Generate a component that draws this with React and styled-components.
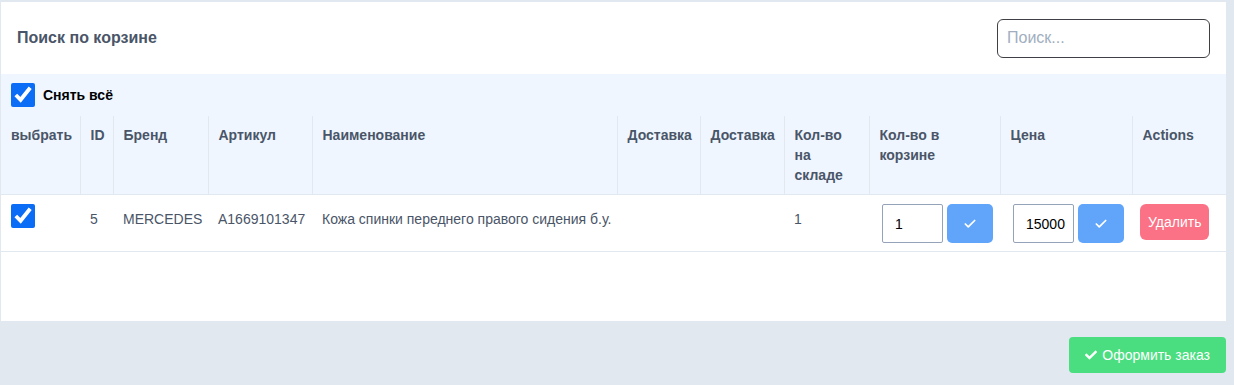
import styled, { createGlobalStyle } from "styled-components";
import { Check } from "lucide-react";
import { FaCheck } from "react-icons/fa";

const GlobalStyle = createGlobalStyle`
  body {
    margin: 0;
    background: #e2e8f0;
    font-family: "Liberation Sans", Arial, sans-serif;
  }
`;

const Page = styled.div`
  padding: 2px 8px 0 1px;
`;

const Card = styled.div`
  background: #fff;
  width: 1225px;
  height: 319px;
`;

const Header = styled.div`
  display: flex;
  align-items: center;
  justify-content: space-between;
  height: 72px;
  padding: 0 16px;
  box-sizing: border-box;
`;

const Title = styled.h2`
  margin: 0;
  font-size: 16px;
  font-weight: 700;
  color: #4a5568;
`;

const Search = styled.input`
  width: 213px;
  height: 39px;
  box-sizing: border-box;
  border: 1px solid #3f3f46;
  border-radius: 6px;
  padding: 0 9px;
  font-size: 16px;
  font-family: inherit;
  outline: none;
  &::placeholder {
    color: #a0aec0;
  }
`;

const SelectAll = styled.label`
  display: flex;
  align-items: center;
  gap: 8px;
  padding: 9px 10px;
  background: #eff6ff;
  font-size: 14px;
  font-weight: 700;
  color: #000;
`;

const Box = styled.input.attrs({ type: "checkbox" })`
  width: 24px;
  height: 24px;
  margin: 0;
  accent-color: #0b6cf5;
`;

const Table = styled.table`
  width: 1225px;
  border-collapse: collapse;
  table-layout: fixed;
`;

const Th = styled.th`
  width: ${(p) => p.w}px;
  background: #eff6ff;
  padding: 9px 10px;
  text-align: left;
  vertical-align: top;
  font-size: 14px;
  line-height: 20px;
  font-weight: 700;
  color: #4a5568;
  border-right: 1px solid #e2e8f0;
  border-bottom: 1px solid #e2e8f0;
  box-sizing: border-box;
  &:last-child {
    border-right: none;
  }
`;

const Td = styled.td`
  padding: 9px 10px 8px;
  vertical-align: top;
  font-size: 14px;
  line-height: 30px;
  color: #4a5568;
  border-bottom: 1px solid #e2e8f0;
  white-space: nowrap;
`;

const Pair = styled.div`
  display: flex;
  gap: 4px;
  margin-left: 3px;
`;

const Num = styled.input`
  flex: none;
  width: 61px;
  height: 39px;
  box-sizing: border-box;
  border: 1px solid #94a3b8;
  border-radius: 2px;
  padding: 0 2px 0 12px;
  font-size: 14px;
  font-family: inherit;
  color: #000;
`;

const Confirm = styled.button`
  flex: none;
  width: 46px;
  height: 39px;
  padding: 0;
  border: none;
  border-radius: 5px;
  background: #60a5fa;
  color: #fff;
  display: flex;
  align-items: center;
  justify-content: center;
`;

const Delete = styled.button`
  height: 36px;
  padding: 0 8px;
  margin-left: -2px;
  border: none;
  border-radius: 6px;
  background: #fb7185;
  color: #fff;
  font-size: 14px;
  font-family: inherit;
`;

const Footer = styled.div`
  display: flex;
  justify-content: flex-end;
  width: 1225px;
  margin-top: 16px;
`;

const Order = styled.button`
  display: flex;
  align-items: center;
  gap: 5px;
  height: 36px;
  padding: 0 16px;
  border: none;
  border-radius: 4px;
  background: #4ade80;
  color: #fff;
  font-size: 14px;
  font-family: inherit;
`;

const columns = [
  ["выбрать", 79],
  ["ID", 33],
  ["Бренд", 95],
  ["Артикул", 104],
  ["Наименование", 305],
  ["Доставка", 83],
  ["Доставка", 84],
  ["Кол-во на складе", 85],
  ["Кол-во в корзине", 131],
  ["Цена", 132],
  ["Actions", 94],
];

const App = () => {
  return (
    <Page>
      <GlobalStyle />
      <Card>
        <Header>
          <Title>Поиск по корзине</Title>
          <Search placeholder="Поиск..." />
        </Header>
        <SelectAll>
          <Box defaultChecked />
          Снять всё
        </SelectAll>
        <Table>
          <thead>
            <tr>
              {columns.map(([name, w], i) => (
                <Th key={i} w={w}>
                  {name}
                </Th>
              ))}
            </tr>
          </thead>
          <tbody>
            <tr>
              <Td>
                <Box defaultChecked />
              </Td>
              <Td>5</Td>
              <Td>MERCEDES</Td>
              <Td>A1669101347</Td>
              <Td>Кожа спинки переднего правого сидения б.у.</Td>
              <Td></Td>
              <Td></Td>
              <Td>1</Td>
              <Td>
                <Pair>
                  <Num defaultValue="1" />
                  <Confirm>
                    <Check size={14} strokeWidth={3} />
                  </Confirm>
                </Pair>
              </Td>
              <Td>
                <Pair>
                  <Num defaultValue="15000" />
                  <Confirm>
                    <Check size={14} strokeWidth={3} />
                  </Confirm>
                </Pair>
              </Td>
              <Td>
                <Delete>Удалить</Delete>
              </Td>
            </tr>
          </tbody>
        </Table>
      </Card>
      <Footer>
        <Order>
          <FaCheck size={12} />
          Оформить заказ
        </Order>
      </Footer>
    </Page>
  );
};

export default App;
